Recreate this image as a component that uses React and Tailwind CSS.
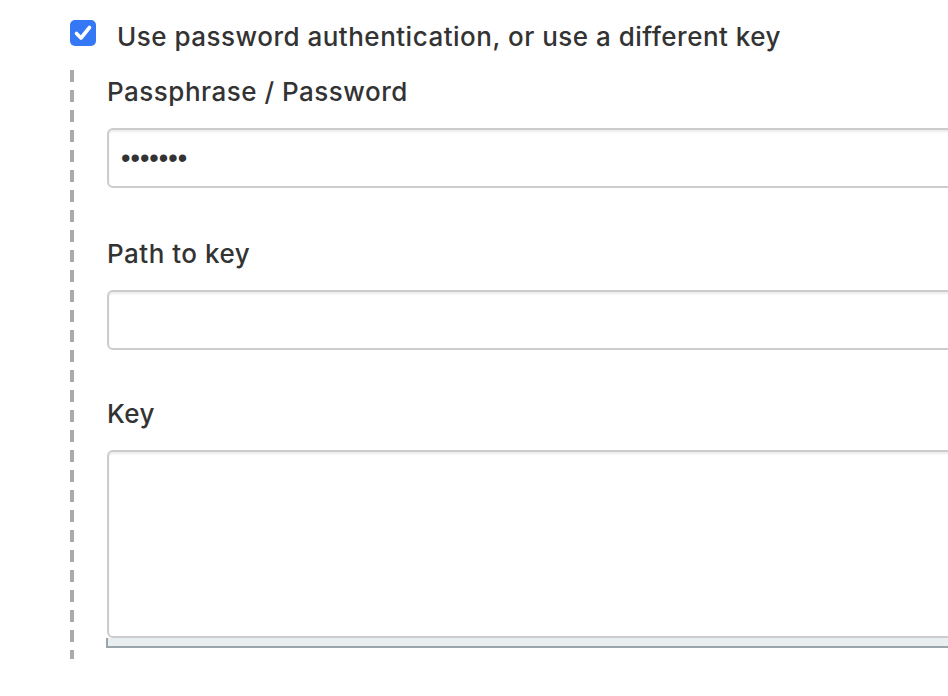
import React from 'react';

const inputClass =
  "block w-[880px] h-[60px] rounded-[6px] border-2 border-[#cccccc] bg-white shadow-[inset_0_2px_2px_rgba(0,0,0,0.075)] outline-none";

const labelClass = "text-[26px] leading-[30px] font-medium tracking-[0.5px]";

const App = () => {
  return (
    <div className="w-[948px] h-[696px] overflow-hidden bg-white text-[#333333] font-['Inter',sans-serif]">
      <div className="pl-[70px] pt-[20px]">
        {/* checkbox row */}
        <label className="flex items-center h-[26px]">
          <span className="flex items-center justify-center w-[26px] h-[26px] rounded-[5px] bg-[#3478f6]">
            <svg width="26" height="26" viewBox="0 0 26 26" fill="none">
              <path
                d="M6.5 13.5 L11 18 L19.5 7.5"
                stroke="white"
                strokeWidth="3.6"
                strokeLinecap="round"
                strokeLinejoin="round"
              />
            </svg>
          </span>
          <span className={"ml-[21px] mt-[7px] " + labelClass}>
            Use password authentication, or use a different key
          </span>
        </label>

        <div className="flex mt-[24px]">
          {/* dashed guide */}
          <div className="w-[4px] shrink-0 bg-[repeating-linear-gradient(to_bottom,#aaaaaa_0px,#aaaaaa_12px,transparent_12px,transparent_20px)]" />

          <div className="pl-[33px] pt-[7px] pb-[11px]">
            <div className={labelClass}>Passphrase / Password</div>
            <input
              type="password"
              readOnly
              defaultValue="1234567"
              className={inputClass + " mt-[21px] pl-[12px] text-[#333333] text-[27px] font-['Liberation_Sans',sans-serif]"}
            />

            <div className={"mt-[51px] " + labelClass}>Path to key</div>
            <input type="text" readOnly className={inputClass + " mt-[21px]"} />

            <div className={"mt-[49px] " + labelClass}>Key</div>
            <textarea
              readOnly
              className="block mt-[21px] w-[880px] h-[188px] resize-none rounded-[6px] border-2 border-[#cccccc] bg-white shadow-[inset_0_2px_2px_rgba(0,0,0,0.075)] outline-none"
            />
            <div className="-ml-[1px] w-[880px] h-[10px] bg-[#e9eef1] border-l-2 border-b-2 border-[#9aa5ab]" />
          </div>
        </div>
      </div>
    </div>
  );
};

export default App;
